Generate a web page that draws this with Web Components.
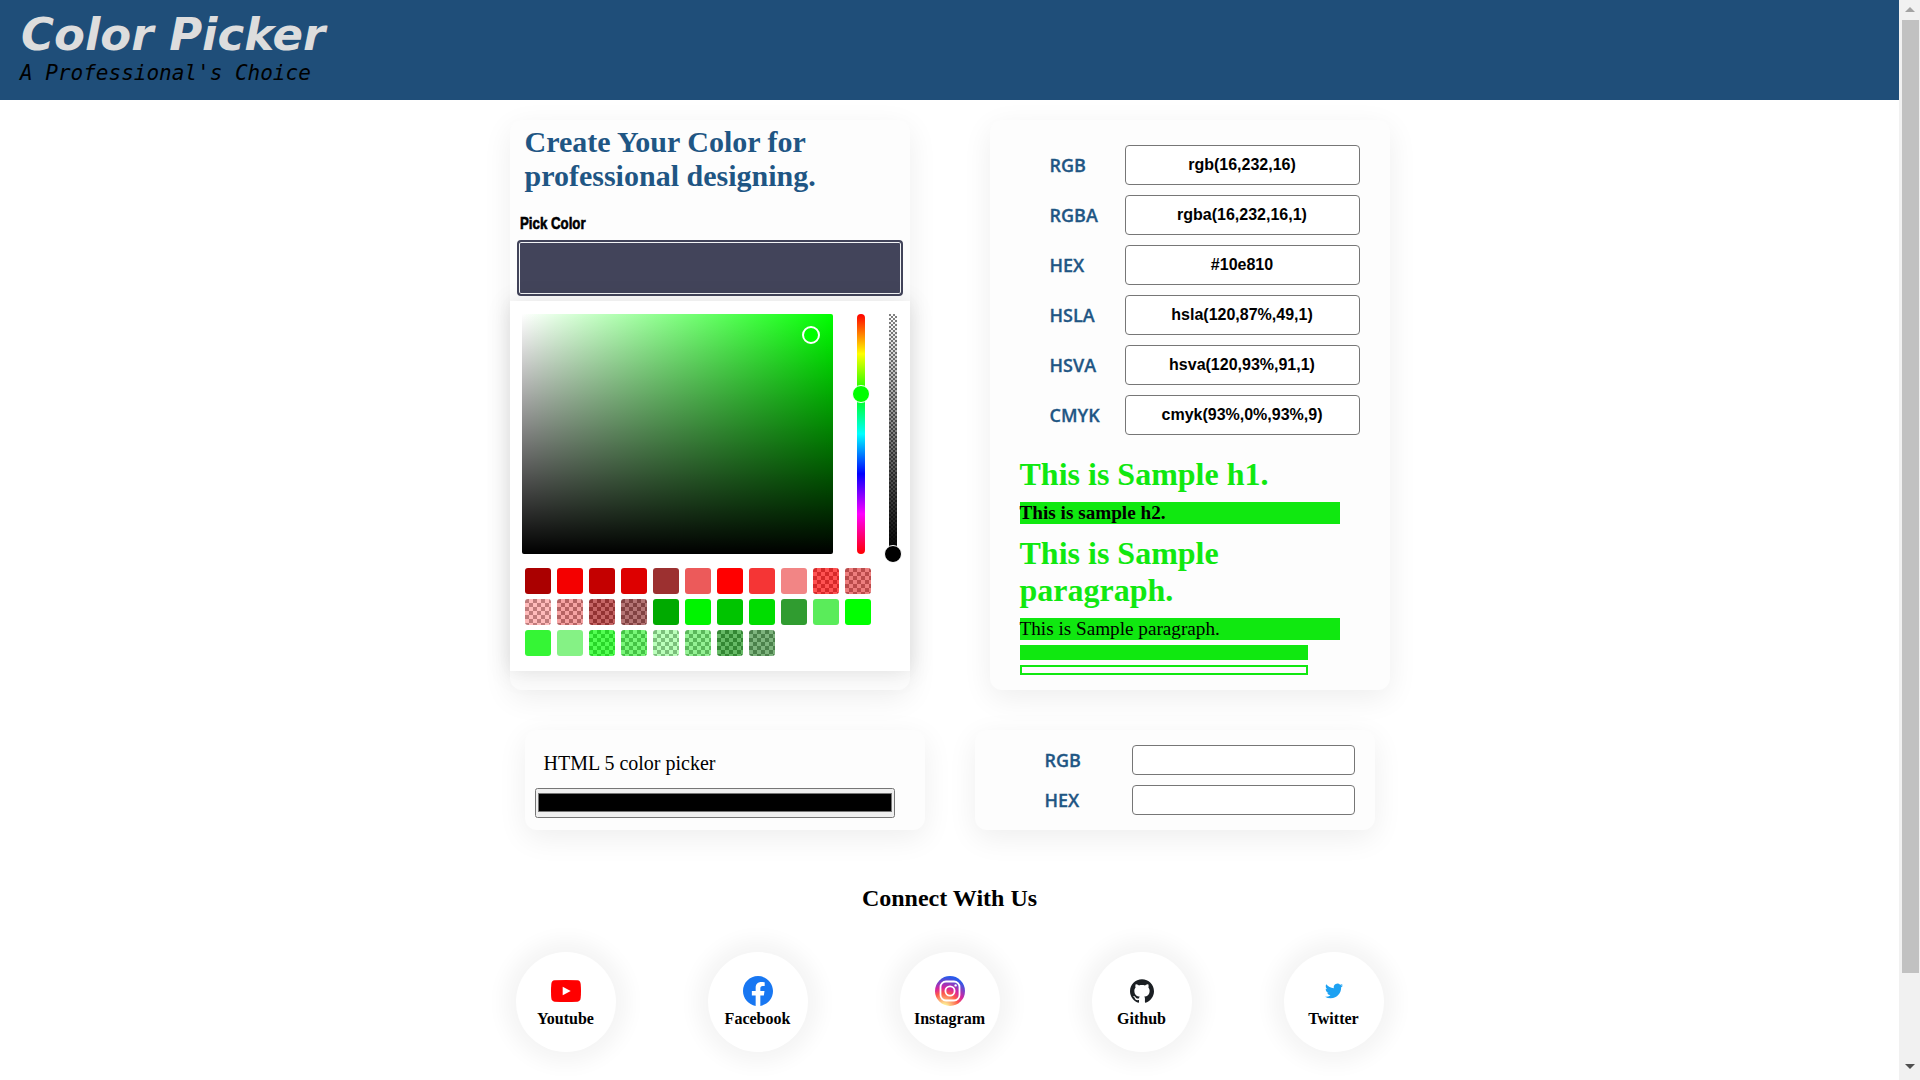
<!DOCTYPE html>
<html lang="en">
<head>
<meta charset="utf-8">
<title>Color Picker</title>
<style>
  html, body { margin: 0; height: 1080px; overflow: hidden; background: #fff; }
  body { display: flex; font-family: "Liberation Serif", serif; color: #000; }
  main { flex: 1; min-width: 0; display: flex; flex-direction: column; }
  .top-row { display: flex; justify-content: center; gap: 80px; margin-top: 20px; }
  .input-row { display: flex; justify-content: center; gap: 50px; margin-top: 40px; }
  svg { display: block; }
</style>
</head>
<body>
<main>
  <app-header title="Color Picker" tagline="A Professional's Choice"></app-header>
  <div class="top-row">
    <base-card height="570">
      <pick-panel></pick-panel>
    </base-card>
    <base-card height="570">
      <value-list></value-list>
      <sample-preview></sample-preview>
    </base-card>
  </div>
  <div class="input-row">
    <base-card height="100"><native-picker></native-picker></base-card>
    <base-card height="100"><convert-form></convert-form></base-card>
  </div>
  <connect-section>
    <social-link label="Youtube">
      <svg width="30" height="30" viewBox="0 0 30 30"><path fill="#f00" d="M3.5 4.3Q15 3.6 26.5 4.3Q29.3 4.6 29.7 8Q30.3 15 29.7 22Q29.3 25.4 26.5 25.7Q15 26.4 3.5 25.7Q.7 25.4.3 22Q-.3 15 .3 8Q.7 4.6 3.5 4.3z"/><path fill="#fff" d="M11.7 10.7L19.7 15L11.7 19.2z"/></svg>
    </social-link>
    <social-link label="Facebook">
      <svg width="30" height="30" viewBox="0 0 24 24"><path fill="#1877f2" d="M24 12.073c0-6.627-5.373-12-12-12s-12 5.373-12 12c0 5.99 4.388 10.954 10.125 11.854v-8.385H7.078v-3.47h3.047V9.43c0-3.007 1.792-4.669 4.533-4.669 1.312 0 2.686.235 2.686.235v2.953H15.83c-1.491 0-1.956.925-1.956 1.874v2.25h3.328l-.532 3.47h-2.796v8.385C19.612 23.027 24 18.062 24 12.073z"/></svg>
    </social-link>
    <social-link label="Instagram">
      <svg width="30" height="30" viewBox="0 0 30 30"><defs><radialGradient id="ig" cx="30%" cy="107%" r="110%"><stop offset="0" stop-color="#fdf497"/><stop offset=".1" stop-color="#fdf497"/><stop offset=".45" stop-color="#fd5949"/><stop offset=".62" stop-color="#d6249f"/><stop offset=".95" stop-color="#285aeb"/></radialGradient></defs><circle cx="15" cy="15" r="15" fill="url(#ig)"/><rect x="5.5" y="5.5" width="19" height="19" rx="5.5" fill="none" stroke="#fff" stroke-width="1.8"/><circle cx="15" cy="15" r="4.6" fill="none" stroke="#fff" stroke-width="1.8"/><circle cx="20.6" cy="9.4" r="1.2" fill="#fff"/></svg>
    </social-link>
    <social-link label="Github">
      <svg width="30" height="30" viewBox="-3 -3 30 30"><path fill="#1b1f23" d="M12 .297c-6.63 0-12 5.373-12 12 0 5.303 3.438 9.8 8.205 11.385.6.113.82-.258.82-.577 0-.285-.01-1.04-.015-2.04-3.338.724-4.042-1.61-4.042-1.61C4.422 18.07 3.633 17.7 3.633 17.7c-1.087-.744.084-.729.084-.729 1.205.084 1.838 1.236 1.838 1.236 1.07 1.835 2.809 1.305 3.495.998.108-.776.417-1.305.76-1.605-2.665-.3-5.466-1.332-5.466-5.93 0-1.31.465-2.38 1.235-3.22-.135-.303-.54-1.523.105-3.176 0 0 1.005-.322 3.3 1.23.96-.267 1.98-.399 3-.405 1.02.006 2.04.138 3 .405 2.28-1.552 3.285-1.23 3.285-1.23.645 1.653.24 2.873.12 3.176.765.84 1.23 1.91 1.23 3.22 0 4.61-2.805 5.625-5.475 5.92.42.36.81 1.096.81 2.22 0 1.606-.015 2.896-.015 3.286 0 .315.21.69.825.57C20.565 22.092 24 17.592 24 12.297c0-6.627-5.373-12-12-12"/></svg>
    </social-link>
    <social-link label="Twitter">
      <svg width="30" height="30" viewBox="-8 -8 40 40"><path fill="#1da1f2" d="M23.953 4.57a10 10 0 01-2.825.775 4.958 4.958 0 002.163-2.723c-.951.555-2.005.959-3.127 1.184a4.92 4.92 0 00-8.384 4.482C7.69 8.095 4.067 6.13 1.64 3.162a4.822 4.822 0 00-.666 2.475c0 1.71.87 3.213 2.188 4.096a4.904 4.904 0 01-2.228-.616v.06a4.923 4.923 0 003.946 4.827 4.996 4.996 0 01-2.212.085 4.936 4.936 0 004.604 3.417 9.867 9.867 0 01-6.102 2.105c-.39 0-.779-.023-1.17-.067a13.995 13.995 0 007.557 2.209c9.053 0 13.998-7.496 13.998-13.985 0-.21 0-.42-.015-.63A9.935 9.935 0 0024 4.59z"/></svg>
    </social-link>
  </connect-section>
</main>
<page-scrollbar></page-scrollbar>

<script>
class AppHeader extends HTMLElement {
    constructor() {
        super();
        this.attachShadow({mode: "open"});
    }
    connectedCallback() {
        this.shadowRoot.innerHTML = `
        <style>
            :host { display: block; height: 100px; background: #1f4e79; padding: 8px 0 0 20px; box-sizing: border-box; }
            h1 { margin: 0 0 0 1px; font: italic bold 45px/53px "DejaVu Sans", sans-serif; color: #ddd; }
            p { margin: 0; font: italic 21px/24px "DejaVu Sans Mono", monospace; color: #000; }
        </style>
        <h1>${this.getAttribute("title")}</h1>
        <p>${this.getAttribute("tagline")}</p>`;
    }
}
customElements.define("app-header", AppHeader);

class BaseCard extends HTMLElement {
    constructor() {
        super();
        this.attachShadow({mode: "open"});
    }
    connectedCallback() {
        this.shadowRoot.innerHTML = `
        <style>
            :host { display: block; width: 400px; height: ${this.getAttribute("height")}px; box-sizing: border-box;
                background: #fdfdfd; border-radius: 12px; box-shadow: 0 8px 30px rgba(0,0,0,.07); }
        </style>
        <slot></slot>`;
    }
}
customElements.define("base-card", BaseCard);

// swatch colours, in the order the panel lists them
const SWATCHES = [
    "#aa0000", "#f40000", "#c40000", "#dd0000", "#9c3030", "#ec5a5a", "#ff0000", "#f53535", "#f28585",
    "rgba(255,0,0,.68)", "rgba(225,40,40,.6)",
    "rgba(255,120,120,.5)", "rgba(235,70,70,.5)", "rgba(160,0,0,.6)", "rgba(130,25,25,.6)",
    "#00aa00", "#00f400", "#00c400", "#00dd00", "#309c30", "#5aec5a", "#00ff00",
    "#35f535", "#85f285",
    "rgba(0,255,0,.68)", "rgba(30,240,30,.6)", "rgba(120,255,120,.5)", "rgba(60,230,60,.55)",
    "rgba(0,140,0,.6)", "rgba(40,130,40,.6)"
];

class PickPanel extends HTMLElement {
    constructor() {
        super();
        this.attachShadow({mode: "open"});
    }
    connectedCallback() {
        const swatches = SWATCHES.map(c => `<i style="--c:${c}"></i>`).join("");
        this.shadowRoot.innerHTML = `
        <style>
            :host { display: block; padding-top: 5px; --check: conic-gradient(#fff 25%, #808080 0 50%, #fff 0 75%, #808080 0) 0 0/8px 8px; }
            h1 { margin: 0 15px; font: bold 30px/34px "Liberation Serif", serif; color: #1f5684; }
            label { display: block; margin: 21px 0 0 10px; height: 20px; font: bold 17px/20px "Liberation Sans", sans-serif; -webkit-text-stroke: .6px #000; transform: scaleX(.78); transform-origin: left; }
            .button { height: 52px; margin: 6px 10px 0 7px; border: 2px solid #42445a; width: 382px; background: #42445a; box-shadow: inset 0 0 0 1px #f1f3f4; border-radius: 4px; }
            .popup { height: 370px; margin-top: 5px; padding: 13px 12px 0; box-sizing: border-box; background: #fff; box-shadow: 0 2px 24px rgba(0,0,0,.1), 0 0 16px rgba(0,0,0,.03); }
            .pick { display: flex; height: 240px; }
            .palette { position: relative; width: 311px; height: 240px; border-radius: 2px;
                background: linear-gradient(to top, #000, transparent), linear-gradient(to right, #fff, #0f0); }
            .bar { position: relative; width: 8px; height: 240px; border-radius: 4px; }
            .hue { margin-left: 24px; background: linear-gradient(to bottom, #f00, #ff0 16.6%, #0f0 33.3%, #0ff 50%, #00f 66.6%, #f0f 83.3%, #f00); }
            .alpha { margin-left: 24px; border-radius: 0; background: linear-gradient(to bottom, transparent, #000), var(--check); background-size: auto, 4px 4px; }
            .handle { position: absolute; box-sizing: border-box; border-radius: 50%; border: 2px solid #fff; width: 18px; height: 18px; background: #0f0; }
            .palette .handle { left: 280px; top: 12px; }
            .hue .handle { left: -5px; top: 71px; border-width: 1px; }
            .alpha .handle { left: -5px; top: 231px; background: #000; border-width: 1px; }
            .swatches { display: grid; grid-template-columns: repeat(11, 26px); column-gap: 6px; row-gap: 5px; margin: 14px 0 0 3px; }
            i { display: block; height: 26px; border-radius: 3px; background: linear-gradient(var(--c), var(--c)), var(--check); }
        </style>
        <h1>Create Your Color for professional designing.</h1>
        <label>Pick Color</label>
        <div class="button"></div>
        <div class="popup">
            <div class="pick">
                <div class="palette"><div class="handle"></div></div>
                <div class="bar hue"><div class="handle"></div></div>
                <div class="bar alpha"><div class="handle"></div></div>
            </div>
            <div class="swatches">${swatches}</div>
        </div>`;
    }
}
customElements.define("pick-panel", PickPanel);

class ValueList extends HTMLElement {
    constructor() {
        super();
        this.attachShadow({mode: "open"});
    }
    connectedCallback() {
        const values = [
            ["RGB", "rgb(16,232,16)"], ["RGBA", "rgba(16,232,16,1)"], ["HEX", "#10e810"],
            ["HSLA", "hsla(120,87%,49,1)"], ["HSVA", "hsva(120,93%,91,1)"], ["CMYK", "cmyk(93%,0%,93%,9)"]
        ];
        this.shadowRoot.innerHTML = `
        <style>
            :host { display: grid; grid-template-columns: 75px 235px; grid-auto-rows: 40px; row-gap: 10px; padding: 25px 0 0 60px; align-items: center; }
            span { font: 600 18px/24px "Open Sans", sans-serif; color: #1f5684; -webkit-text-stroke: .3px #1f5684; }
            div { height: 40px; box-sizing: border-box; border: 1px solid #767676; border-radius: 4px; background: #fff; text-align: center; font: bold 16px/38px "Liberation Sans", sans-serif; }
        </style>
        ${values.map(v => `<span>${v[0]}</span><div>${v[1]}</div>`).join("")}`;
    }
}
customElements.define("value-list", ValueList);

class SamplePreview extends HTMLElement {
    constructor() {
        super();
        this.attachShadow({mode: "open"});
    }
    connectedCallback() {
        this.shadowRoot.innerHTML = `
        <style>
            :host { display: block; padding: 21px 0 0 30px; width: 320px; --sample: #10e810; }
            h1 { margin: 0; font: bold 32px/37px "Liberation Serif", serif; color: var(--sample); width: 270px; }
            .h1 { width: auto; }
            h2 { margin: 9px 0 11px; font: bold 19.2px/22px "Liberation Serif", serif; background: var(--sample); }
            p { margin: 9px 0 5px; font: 19.2px/22px "Liberation Serif", serif; background: var(--sample); }
            .solid { width: 288px; height: 15px; background: var(--sample); }
            .outline { width: 288px; height: 10px; margin-top: 5px; box-sizing: border-box; border: 2px solid var(--sample); }
        </style>
        <h1 class="h1">This is Sample h1.</h1>
        <h2>This is sample h2.</h2>
        <h1>This is Sample paragraph.</h1>
        <p>This is Sample paragraph.</p>
        <div class="solid"></div>
        <div class="outline"></div>`;
    }
}
customElements.define("sample-preview", SamplePreview);

class NativePicker extends HTMLElement {
    constructor() {
        super();
        this.attachShadow({mode: "open"});
    }
    connectedCallback() {
        this.shadowRoot.innerHTML = `
        <style>
            :host { display: block; padding: 21px 0 0 10px; }
            div { padding-left: 9px; font: 20px/24px "Liberation Serif", serif; }
            input { display: block; width: 360px; height: 30px; margin: 13px 0 0; box-sizing: border-box; }
            input::-webkit-color-swatch-wrapper { padding: 3px 0 4px; }
        </style>
        <div>HTML 5 color picker</div>
        <input type="color" value="#000000">`;
    }
}
customElements.define("native-picker", NativePicker);

class ConvertForm extends HTMLElement {
    constructor() {
        super();
        this.attachShadow({mode: "open"});
    }
    connectedCallback() {
        this.shadowRoot.innerHTML = `
        <style>
            :host { display: grid; grid-template-columns: 87px 223px; grid-auto-rows: 30px; row-gap: 10px; padding: 15px 0 0 70px; align-items: center; }
            span { font: 600 18px/24px "Open Sans", sans-serif; color: #1f5684; -webkit-text-stroke: .3px #1f5684; }
            input { width: 223px; height: 30px; box-sizing: border-box; margin: 0; border: 1px solid #767676; border-radius: 4px; background: #fff; }
        </style>
        <span>RGB</span><input>
        <span>HEX</span><input>`;
    }
}
customElements.define("convert-form", ConvertForm);

class ConnectSection extends HTMLElement {
    constructor() {
        super();
        this.attachShadow({mode: "open"});
    }
    connectedCallback() {
        this.shadowRoot.innerHTML = `
        <style>
            :host { display: block; padding-top: 54px; }
            h2 { margin: 0; text-align: center; font: bold 24px/28px "Liberation Serif", serif; }
            .links { display: grid; grid-template-columns: repeat(5, 192px); justify-content: center; justify-items: center; margin-top: 40px; }
        </style>
        <h2>Connect With Us</h2>
        <div class="links"><slot></slot></div>`;
    }
}
customElements.define("connect-section", ConnectSection);

class SocialLink extends HTMLElement {
    constructor() {
        super();
        this.attachShadow({mode: "open"});
    }
    connectedCallback() {
        this.shadowRoot.innerHTML = `
        <style>
            :host { display: flex; flex-direction: column; align-items: center; width: 100px; height: 100px; padding-top: 24px; box-sizing: border-box;
                border-radius: 50%; background: #fff; box-shadow: 0 0 20px 12px rgba(0,0,0,.045); }
            span { margin-top: 3px; font: bold 16px/20px "Liberation Serif", serif; }
        </style>
        <slot></slot>
        <span>${this.getAttribute("label")}</span>`;
    }
}
customElements.define("social-link", SocialLink);

class PageScrollbar extends HTMLElement {
    constructor() {
        super();
        this.attachShadow({mode: "open"});
    }
    connectedCallback() {
        this.shadowRoot.innerHTML = `
        <style>
            :host { display: flex; flex-direction: column; align-items: center; width: 21px; height: 1080px; flex: none; background: #f1f1f1; padding-left: 1px; box-sizing: border-box; }
            .thumb { width: 17px; height: 953px; background: #c1c1c1; }
            .up, .down { width: 0; height: 0; border-left: 5px solid transparent; border-right: 5px solid transparent; }
            .up { margin: 7px 0 8px; border-bottom: 5px solid #a3a3a3; }
            .down { margin-top: 91px; border-top: 5px solid #505050; }
        </style>
        <div class="up"></div>
        <div class="thumb"></div>
        <div class="down"></div>`;
    }
}
customElements.define("page-scrollbar", PageScrollbar);
</script>
</body>
</html>
